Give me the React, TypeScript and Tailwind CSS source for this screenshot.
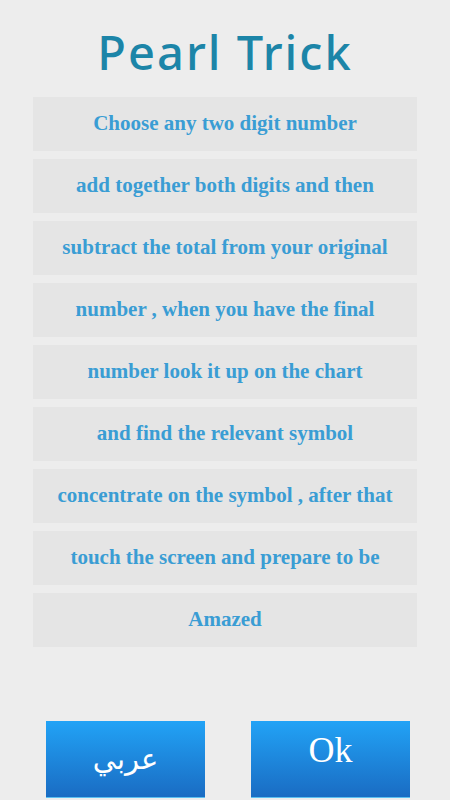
import React from "react";

const lines = [
  "Choose any two digit number",
  "add together both digits and then",
  "subtract the total from your original",
  "number , when you have the final",
  "number look it up on the chart",
  "and find the relevant symbol",
  "concentrate on the symbol , after that",
  "touch the screen and prepare to be",
  "Amazed",
];

export default function App() {
  return (
    <div className="w-[450px] h-[800px] bg-[#ededed] flex flex-col overflow-hidden">
      <div className="h-[97px] flex items-start justify-center pt-[24px]">
        <h1
          className="text-[#1c85a8] text-[47px] font-medium leading-[56px] tracking-[2px]"
          style={{ fontFamily: '"Noto Sans", "Open Sans", sans-serif' }}
        >
          Pearl Trick
        </h1>
      </div>
      <div className="flex flex-col gap-[8px] pl-[33px] pr-[33px]">
        {lines.map((t) => (
          <div
            key={t}
            className="h-[54px] bg-[#e5e5e5] flex items-center justify-center text-[#3a9dd4] font-bold text-[21px] pb-[1px]"
            style={{ fontFamily: '"Liberation Serif", serif' }}
          >
            {t}
          </div>
        ))}
      </div>
      <div className="flex-1" />
      <div className="flex gap-[46px] pl-[46px] pb-[2px]">
        <div className="w-[159px] h-[77px] bg-gradient-to-b from-[#22a3f6] to-[#1a6cc3] border-b border-[#5cc0f0] flex items-center justify-center">
          <span
            className="text-white text-[29px] leading-none"
            style={{ fontFamily: '"DejaVu Sans", "Noto Sans", sans-serif' }}
          >
            عربي
          </span>
        </div>
        <div className="w-[159px] h-[77px] bg-gradient-to-b from-[#22a3f6] to-[#1a6cc3] border-b border-[#5cc0f0] flex items-start justify-center pt-[11px]">
          <span
            className="text-white text-[36px] leading-none"
            style={{ fontFamily: '"Liberation Serif", serif' }}
          >
            Ok
          </span>
        </div>
      </div>
    </div>
  );
}
